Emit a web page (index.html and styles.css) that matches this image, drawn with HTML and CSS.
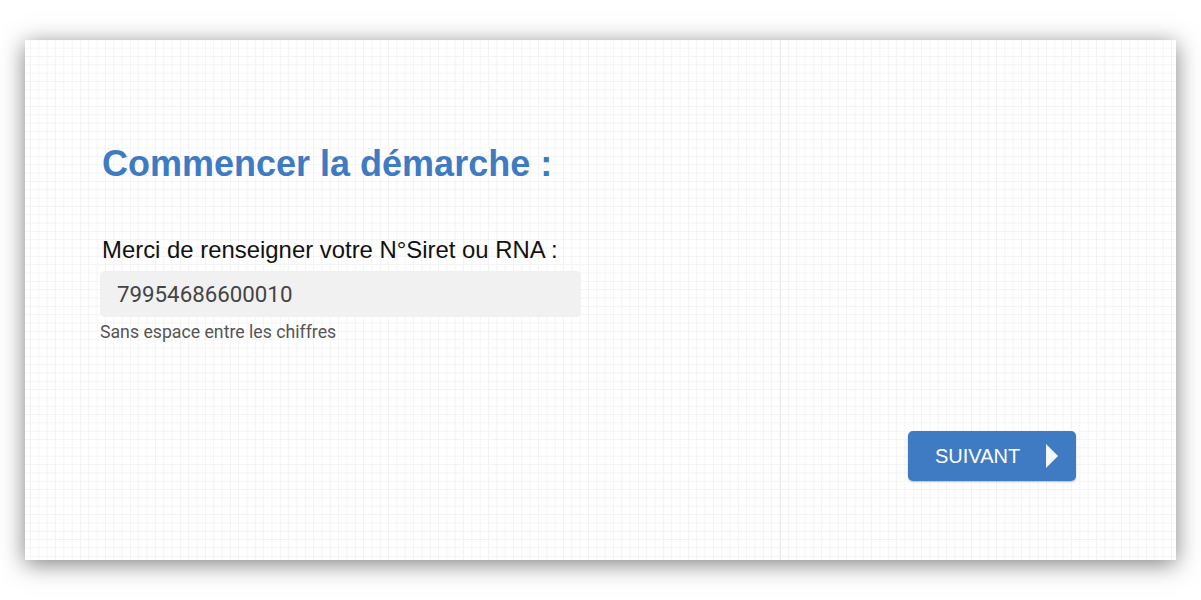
FILE: index.html
```html
<!DOCTYPE html>
<html lang="fr">
<head>
<meta charset="utf-8">
<link rel="stylesheet" href="styles.css">
</head>
<body>
<div class="page">
  <div class="card">
    <h1 class="title">Commencer la démarche :</h1>
    <form class="form">
      <label class="label" for="siret">Merci de renseigner votre N°Siret ou RNA :</label>
      <input class="input" id="siret" type="text" value="79954686600010">
      <div class="help">Sans espace entre les chiffres</div>
    </form>
    <div class="actions">
      <button class="btn" type="button">SUIVANT
        <svg class="arrow" width="12" height="24" viewBox="0 0 12 24"><path d="M0 0 L12 12 L0 24 Z" fill="#f4f6fa"/></svg>
      </button>
    </div>
  </div>
</div>
</body>
</html>
```
FILE: styles.css
```css
html, body { margin: 0; padding: 0; background: #fff; }
.page { padding: 40px 25px 40px 25px; }
.card {
  box-sizing: border-box;
  width: 1151px;
  height: 520px;
  background-color: #fff;
  background-image:
    linear-gradient(to right, #ececec 0, #ececec 1px, transparent 1px),
    linear-gradient(to right, #f3f3f3 0, #f3f3f3 1px, transparent 1px),
    linear-gradient(to bottom, #f3f3f3 0, #f3f3f3 1px, transparent 1px);
  background-size: 1px 100%, 8.333px 8.333px, 8.333px 8.333px;
  background-position: 755px 0, 5px 0, 0 7.7px;
  background-repeat: no-repeat, repeat, repeat;
  box-shadow: 0 4px 22px rgba(0,0,0,0.5);
  padding: 105px 100px 0 77px;
  display: flex;
  flex-direction: column;
}
.title {
  margin: 0;
  font-family: "Liberation Sans", Arial, sans-serif;
  font-weight: bold;
  font-size: 36px;
  line-height: 38px;
  color: #3f7bc3;
}
.form {
  margin-top: 55px;
  display: flex;
  flex-direction: column;
  align-items: flex-start;
}
.label {
  font-family: "Liberation Sans", Arial, sans-serif;
  font-size: 23.9px;
  line-height: 24px;
  color: #111;
}
.input {
  box-sizing: border-box;
  margin: 9px 0 0 -2px;
  width: 481px;
  height: 46px;
  border: none;
  border-radius: 5px;
  background: #f1f1f1;
  padding: 0 17px;
  font-family: Roboto, sans-serif;
  font-size: 22.3px;
  color: #444;
  outline: none;
}
.help {
  margin: 5px 0 0 -2px;
  font-family: Roboto, sans-serif;
  font-size: 17.7px;
  line-height: 20px;
  color: #555;
}
.actions {
  margin-top: 89px;
  display: flex;
  justify-content: flex-end;
}
.btn {
  box-sizing: border-box;
  width: 168px;
  height: 50px;
  border: none;
  border-radius: 5px;
  background: #3f7bc3;
  box-shadow: 0 1px 2px rgba(0,0,0,0.25);
  color: #fff;
  font-family: "Liberation Sans", Arial, sans-serif;
  font-size: 20px;
  display: flex;
  align-items: center;
  justify-content: space-between;
  padding: 0 18px 0 27px;
}
.arrow { display: block; }
```
